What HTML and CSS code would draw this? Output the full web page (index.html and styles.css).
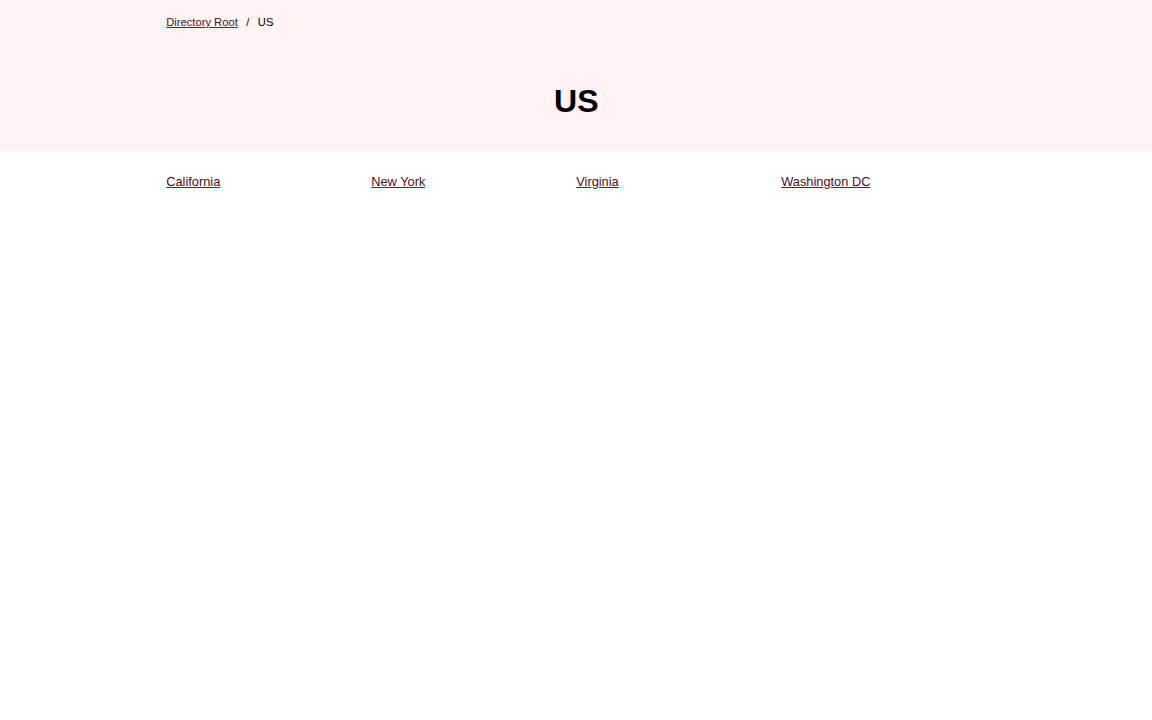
FILE: index.html
```html
<!DOCTYPE html>
<html>
<head>
<meta charset="utf-8">
<link rel="stylesheet" href="styles.css">
</head>
<body>
<header class="hero">
  <div class="container">
    <nav class="crumbs"><a href="#">Directory Root</a><span class="sep">/</span><span>US</span></nav>
    <h1 class="title">US</h1>
  </div>
</header>
<main class="container">
  <ul class="grid">
    <li><a href="#">California</a></li>
    <li><a href="#">New York</a></li>
    <li><a href="#">Virginia</a></li>
    <li><a href="#">Washington DC</a></li>
  </ul>
</main>
</body>
</html>
```
FILE: styles.css
```css
html, body { margin: 0; padding: 0; background: #fff; }
body { font-family: "Liberation Sans", Arial, sans-serif; color: #000; }
a { color: #4a1020; text-decoration: underline; text-decoration-color: #7a1a2a; }
.container { width: 820px; margin: 0 auto; padding-left: 0.5px; }
.hero { background: #fff3f4; height: 151px; }
.hero .container { display: flex; flex-direction: column; }
.crumbs { font-size: 11.2px; padding-top: 16px; line-height: 13px; display: flex; align-items: center; }
.sep { margin: 0 8.5px; }
.title { margin: 0; text-align: center; font-size: 32px; font-weight: bold; padding-top: 54px; line-height: 37px; }
.grid { list-style: none; margin: 0; padding: 23px 0 0; display: grid; grid-template-columns: repeat(4, 1fr); font-size: 12.8px; line-height: 15px; }
```
